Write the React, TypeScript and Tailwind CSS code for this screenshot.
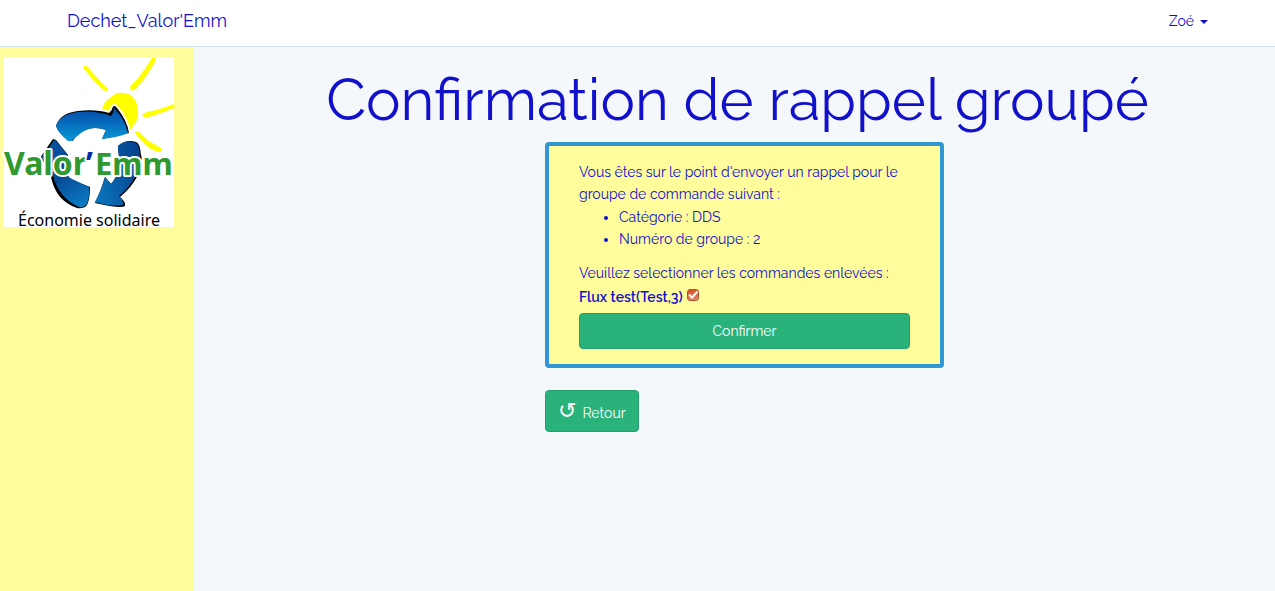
import { useState } from 'react';

function Logo() {
  return (
    <svg viewBox="0 0 170 170" role="img" aria-label="Valor'Emm" className="block h-[170px] w-[170px] overflow-visible bg-white">
      <defs>
        <linearGradient id="topBlue" x1="0" y1="0" x2="0" y2="1">
          <stop offset="0" stopColor="#0647a6" />
          <stop offset="1" stopColor="#0798d6" />
        </linearGradient>
        <linearGradient id="leftBlue" gradientUnits="userSpaceOnUse" x1="46" y1="90" x2="82" y2="150">
          <stop offset="0" stopColor="#08519f" />
          <stop offset="0.45" stopColor="#064a94" />
          <stop offset="1" stopColor="#0a80c8" />
        </linearGradient>
        <linearGradient id="rightBlue" gradientUnits="userSpaceOnUse" x1="92" y1="120" x2="136" y2="110">
          <stop offset="0" stopColor="#0a72b8" />
          <stop offset="1" stopColor="#05428e" />
        </linearGradient>
      </defs>
      <g fill="#ffff00" stroke="#ffff00" strokeLinejoin="round" strokeWidth="1">
        <path d="M79.500 11 Q79.500 8.500 82.500 9.500 L92 20 L104 32.500 Q103.500 34.500 101 33.500 L91 24.500 Z" />
        <path d="M148 1.500 L151 1 L151 4 L142 19 L133 30 Q130 34.500 127 32.500 Q125.500 29.500 129 27 Q138 18 148 1.500 Z" />
        <path d="M139 57 Q145 54.500 153 53.500 L170 47.500 L170 50.500 L156 56 L141 60.500 Q138.500 59 139 57 Z" />
        <path d="M131.500 75.500 Q134 73.500 137 77 L144 84 L156 91 Q159 94 155 94.500 Q148 93.500 141 87 Q134 80 131.500 75.500 Z" />
      </g>
      <path d="M98 53 Q99 45 107 40 L112 36.500 Q119 34.500 127 38 Q136 46 133.500 62 Q130 68 126 73 L109 56 Z" fill="#ffff00" />
      <path
        d="M52 69 Q56 56 74 54 Q92 52 105 56 Q108 54 109 49.500 Q111 48 113 51 Q123 63 125 76 L98 82 L102 73 Q88 68 76 76 Q70 81 69 84 Q54 76 52 69 Z"
        fill="#000"
        stroke="#fff"
        strokeWidth="4"
        paintOrder="stroke"
      />
      <path d="M52 69 Q56 57 74 55 Q92 53 107 59 Q109 57 110 51 Q121 62 124 76 Q116 80 98 82 L102 73 Q88 68 77 76 Q70 81 68 84 L64 84 Q54 76 52 69 Z" fill="url(#topBlue)" />
      <path d="M42 92 L49 82 L52 83 L64 98 Q57 112 66 122 L86 130 Q86 142 83 148 Q80 152 73 151 Q52 144 47 120 L42 108 L36 101 Z" fill="#000" />
      <path d="M44 92 L50 83 L52 84 L64 98 Q58 112 66 121 L85 130 Q86 142 82 148 Q79 151 75 150 Q55 141 49 119 L44 107 L37 100 Z" fill="url(#leftBlue)" />
      <path d="M114 89 Q122 82 132 85 Q136 86 137 98 Q139 101 134 118 Q128 130 116 140 Q122 145 121 149 Q117 152 91 146 Q97 134 101 120 L107 127 Q118 115 114 92 Z" fill="#000" />
      <path d="M114 89 Q122 82 132 86 Q135 88 136 98 Q137 103 132 118 Q126 130 115 139 Q120 144 119 148 Q107 150 91 145 Q97 134 101 120 L107 127 Q118 115 114 92 Z" fill="url(#rightBlue)" />
      <g
        className="font-['Noto_Sans'] font-bold"
        stroke="#fff"
        strokeWidth="4"
        strokeLinejoin="round"
        paintOrder="stroke"
        fill="#2f992f"
      >
        <text x="0" y="118" fontSize="32">Valor</text>
        <text x="82" y="118" fontSize="32" fill="#0729a5">’</text>
        <text x="91" y="118" fontSize="31">Emm</text>
      </g>
      <text x="14" y="169" fontSize="16" fill="#000" className="font-['Noto_Sans']">
        Économie solidaire
      </text>
    </svg>
  );
}

export default function App() {
  const [checked, setChecked] = useState(true);

  return (
    <div className="flex min-h-screen flex-col bg-[#f5f8fa] font-[Raleway,Lato,sans-serif] text-[14px] leading-[22px] text-[#1111cc]">
      <header className="flex h-[47px] items-center justify-between border-b border-[#d3e0e9] bg-white px-[67px] pb-1">
        <a href="#" className="text-[18px]">Dechet_Valor'Emm</a>
        <button type="button" className="flex items-center gap-1.5">
          Zoé
          <svg viewBox="0 0 8 4" className="mt-0.5 h-1 w-2" fill="currentColor" aria-hidden="true">
            <path d="M0 0h8L4 4z" />
          </svg>
        </button>
      </header>
      <div className="flex flex-1">
        <aside className="w-[194px] shrink-0 bg-[#fffd9b] px-1 py-2.5">
          <Logo />
        </aside>
        <main className="flex-1 pt-5 pl-[6px]">
          <h1 className="text-center text-[58px] leading-[66px]">Confirmation de rappel groupé</h1>
          <div className="mt-[9px] flex flex-col items-center pl-3.5">
            <div className="w-[399px]">
              <form
                onSubmit={(e) => e.preventDefault()}
                className="rounded-[4px] border-4 border-[#3097d1] bg-[#fffd9b] px-[30px] py-[15px]"
              >
                <p>Vous êtes sur le point d'envoyer un rappel pour le groupe de commande suivant :</p>
                <ul className="mb-3 list-disc pt-px pl-10">
                  <li>Catégorie : DDS</li>
                  <li>Numéro de groupe : 2</li>
                </ul>
                <p>Veuillez selectionner les commandes enlevées :</p>
                <div className="mt-0.5 flex gap-1">
                  <label htmlFor="flux" className="font-semibold">Flux test(Test,3)</label>
                  <span className="grid self-start pt-[3px]">
                    <input
                      id="flux"
                      type="checkbox"
                      checked={checked}
                      onChange={(e) => setChecked(e.target.checked)}
                      className="col-start-1 row-start-1 size-3 appearance-none rounded-[3px] border border-[#b5532f] bg-white peer checked:bg-linear-to-b checked:from-[#d4502a] checked:to-[#e28664]"
                    />
                    <svg
                      viewBox="0 0 12 12"
                      className="pointer-events-none invisible col-start-1 row-start-1 size-3 peer-checked:visible"
                      fill="none"
                      stroke="#fff"
                      strokeWidth="2"
                      aria-hidden="true"
                    >
                      <path d="M2 5.500L5 8.500L10.500 2.500" />
                    </svg>
                  </span>
                </div>
                <button type="submit" className="mt-[5px] block h-9 w-full rounded-[4px] border border-[#259d6d] bg-[#2ab27b] text-white">
                  Confirmer
                </button>
              </form>
              <a
                href="#"
                className="mt-[22px] inline-flex h-[42px] items-center gap-1.5 rounded-[4px] border border-[#259d6d] bg-[#2ab27b] px-3 text-white"
              >
                <span className="font-['DejaVu_Sans'] text-[22px]" aria-hidden="true">↺</span>
                <span className="pt-1">Retour</span>
              </a>
            </div>
          </div>
        </main>
      </div>
    </div>
  );
}
